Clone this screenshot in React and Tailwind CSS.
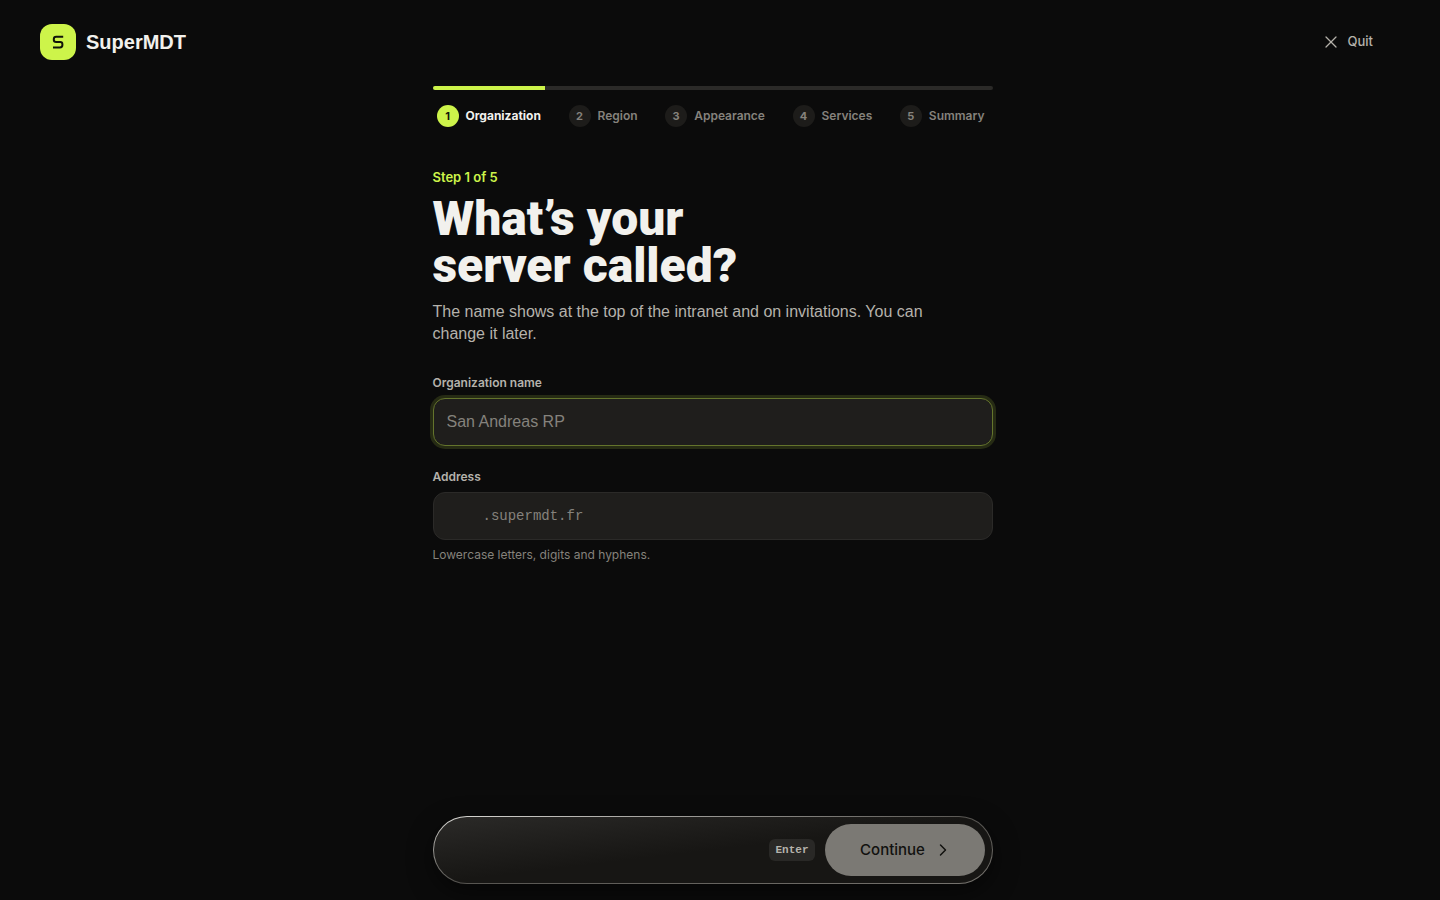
import { useState } from 'react';
import { ChevronRight, X } from 'lucide-react';

const steps = ['Organization', 'Region', 'Appearance', 'Services', 'Summary'];

function Logo() {
  return (
    <a href="/" className="flex items-center gap-2.5">
      <span className="flex size-9 items-center justify-center rounded-xl bg-[#cdf44a]">
        <svg viewBox="0 0 12 14" className="h-3.5 w-3" fill="none" stroke="#11130a" strokeWidth="2" strokeLinejoin="round" aria-hidden="true">
          <path d="M11.2 1.8H4.2Q1.8 1.8 1.8 4.2V4.8Q1.8 7 4.2 7H8.2Q10.4 7 10.4 9.2V10Q10.4 12.4 8 12.4H1" />
        </svg>
      </span>
      <span className="font-['Liberation_Sans',Arial,sans-serif] text-xl font-bold text-[#f2f1ed]">SuperMDT</span>
    </a>
  );
}

function Progress({ current }) {
  return (
    <nav aria-label="Setup steps">
      <div className="h-1 overflow-hidden rounded-full bg-[#2b2a28]">
        <div className="h-full bg-[#cdf44a]" style={{ width: `${(current / steps.length) * 100}%` }} />
      </div>
      <ol className="mt-[15px] flex justify-between pr-2 pl-1">
        {steps.map((name, i) => {
          const active = i + 1 === current;
          return (
            <li
              key={name}
              aria-current={active ? 'step' : undefined}
              className={`flex items-center gap-[7px] text-xs ${active ? 'font-bold text-[#f2f1ed]' : 'font-semibold text-[#85827c]'}`}
            >
              <span
                className={`flex size-[22px] items-center justify-center rounded-full text-[11px] font-bold ${active ? 'bg-[#cdf44a] text-[#11130a]' : 'bg-[#1d1c1a] text-[#85827c]'}`}
              >
                {i + 1}
              </span>
              {name}
            </li>
          );
        })}
      </ol>
    </nav>
  );
}

export default function App() {
  const [name, setName] = useState('');
  const [slug, setSlug] = useState('');

  const handleSubmit = (e) => {
    e.preventDefault();
  };

  return (
    <div className="flex min-h-screen flex-col bg-[#0b0b0b] pr-[15px] font-['Inter',sans-serif] text-[#f2f1ed]">
      <header className="flex items-center justify-between px-10 pt-6 pb-[26px]">
        <Logo />
        <button type="button" className="flex items-center gap-1.5 px-3 text-[13px] font-medium text-[#b5b2ab]">
          <X className="size-5" strokeWidth={1.5} />
          Quit
        </button>
      </header>

      <form onSubmit={handleSubmit} className="mx-auto flex w-full max-w-[560px] flex-1 flex-col pb-4">
        <Progress current={1} />

        <main className="flex-1 pt-10">
          <p className="text-[13px] leading-5 font-semibold text-[#cdf44a]">Step 1 of 5</p>
          <h1 className="mt-2 font-['Roboto',sans-serif] text-5xl leading-[47px] font-black">
            What’s your
            <br />
            server called?
          </h1>
          <p className="mt-3 max-w-[500px] font-['Liberation_Sans',Arial,sans-serif] text-base leading-[22px] text-[#b5b2ab]">
            The name shows at the top of the intranet and on invitations. You can change it later.
          </p>

          <label htmlFor="org" className="mt-7 block text-xs leading-5 font-semibold text-[#b5b2ab]">
            Organization name
          </label>
          <input
            id="org"
            type="text"
            value={name}
            onChange={(e) => setName(e.target.value)}
            placeholder="San Andreas RP"
            className="mt-[5px] h-12 w-full rounded-xl border border-[#64742c] bg-[#1f1e1c] px-[13px] font-['Liberation_Sans',Arial,sans-serif] text-base ring-3 ring-[#262b14] outline-none placeholder:text-[#85827c]"
          />

          <label htmlFor="slug" className="mt-[21px] block text-xs leading-5 font-semibold text-[#b5b2ab]">
            Address
          </label>
          <div className="mt-[5px] flex h-12 items-center rounded-xl border border-[#2b2a28] bg-[#1f1e1c] px-[13px] font-['Liberation_Mono',monospace] text-sm text-[#85827c]">
            <input
              id="slug"
              type="text"
              value={slug}
              onChange={(e) => setSlug(e.target.value)}
              className="w-9 bg-transparent outline-none"
            />
            <span>.supermdt.fr</span>
          </div>
          <p className="mt-1.5 text-xs leading-[18px] text-[#85827c]">Lowercase letters, digits and hyphens.</p>
        </main>

        <div className="rounded-full bg-linear-to-br from-[#dddcd8] via-[#55534f] to-[#77746f] p-px shadow-[0_8px_24px_rgba(0,0,0,0.5)]">
          <div className="flex items-center justify-end gap-2.5 rounded-full bg-linear-to-br from-[#2b2a28] via-[#171614] to-[#171614] p-[7px]">
            <kbd className="rounded-md bg-[#292826] px-1.5 font-['Liberation_Mono',monospace] text-[11px] leading-[22px] font-bold text-[#b5b2ab]">
              Enter
            </kbd>
            <button
              type="submit"
              className="flex h-[52px] w-40 items-center justify-center gap-2 rounded-full bg-[#7b7974] pl-1 text-[15px] font-medium text-[#11110f]"
            >
              Continue
              <ChevronRight className="size-5" strokeWidth={1.75} />
            </button>
          </div>
        </div>
      </form>
    </div>
  );
}
